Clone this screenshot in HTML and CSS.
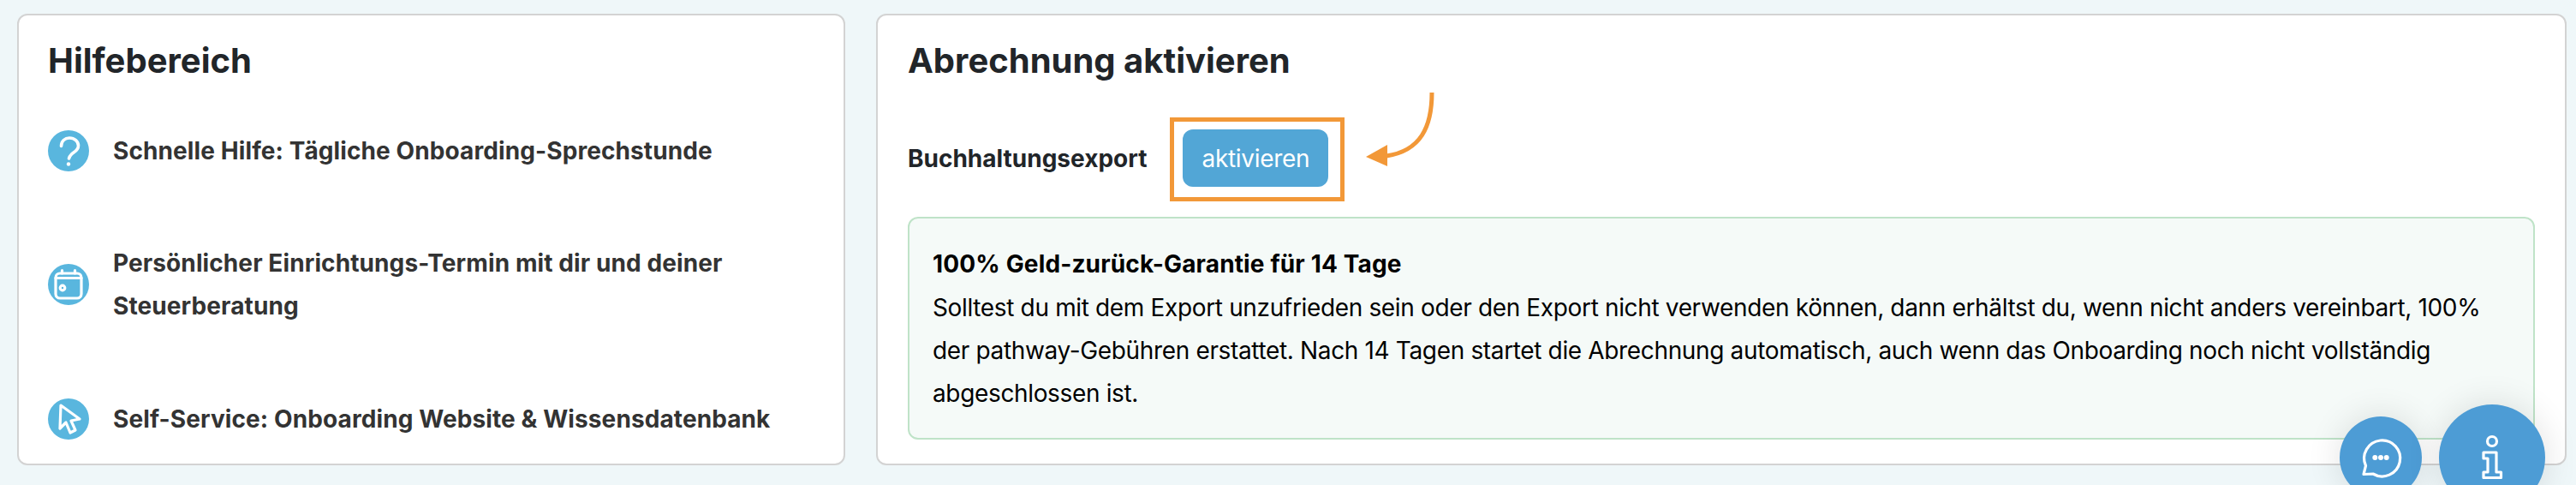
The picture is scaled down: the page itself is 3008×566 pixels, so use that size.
FILE: index.html
```html
<!DOCTYPE html>
<html lang="de">
<head>
    <meta charset="UTF-8">
    <meta name="viewport" content="width=device-width, initial-scale=1.0">
    <title>Abrechnung aktivieren</title>
    <link rel="stylesheet" href="styles.css">
</head>
<body>
    <div class="page">
        <section class="card card-help">
            <h2>Hilfebereich</h2>
            <ul class="help-list">
                <li>
                    <svg class="help-icon" viewBox="0 0 48 48">
                        <circle class="disc" cx="24" cy="24" r="24"/>
                        <path class="line line-thick" d="M15.5 18.5C15.5 12.5 20 9 25 9c6 0 10.500 4 10.500 9 0 6-5.500 7.500-8 10-1.500 1.500-2.500 3-3 5"/>
                        <circle class="dot" cx="24" cy="39.500" r="2.200"/>
                    </svg>
                    <span>Schnelle Hilfe: Tägliche Onboarding-Sprechstunde</span>
                </li>
                <li>
                    <svg class="help-icon" viewBox="0 0 48 48">
                        <circle class="disc" cx="24" cy="24" r="24"/>
                        <rect class="line" x="9" y="11" width="30" height="29" rx="5"/>
                        <path class="line" d="M9 16.500h30M16.500 7.500V11M31.500 7.500V11"/>
                        <circle class="line" cx="17" cy="28" r="2.800"/>
                    </svg>
                    <span>Persönlicher Einrichtungs-Termin mit dir und deiner Steuerberatung</span>
                </li>
                <li>
                    <svg class="help-icon" viewBox="0 0 48 48">
                        <circle class="disc" cx="24" cy="24" r="24"/>
                        <path class="line" d="M15 8L37 24l-10 2 5 11-6 3-5-12-7 7z"/>
                    </svg>
                    <span>Self-Service: Onboarding Website &amp; Wissensdatenbank</span>
                </li>
            </ul>
        </section>

        <section class="card card-billing">
            <h2>Abrechnung aktivieren</h2>
            <div class="export-row">
                <span class="export-label">Buchhaltungsexport</span>
                <div class="highlight">
                    <button class="btn-activate">aktivieren</button>
                    <svg class="arrow" viewBox="0 0 84 92">
                        <path d="M77 0C77 40 64 68 24 74" fill="none" stroke="#f29838" stroke-width="5"/>
                        <path d="M0 75L25 61V86z" fill="#f29838"/>
                    </svg>
                </div>
            </div>
            <div class="guarantee">
                <strong>100% Geld-zurück-Garantie für 14 Tage</strong>
                <p>Solltest du mit dem Export unzufrieden sein oder den Export nicht verwenden können, dann erhältst du, wenn nicht anders vereinbart, 100% der pathway-Gebühren erstattet. Nach 14 Tagen startet die Abrechnung automatisch, auch wenn das Onboarding noch nicht vollständig abgeschlossen ist.</p>
            </div>
        </section>
    </div>

    <div class="fab-group">
        <button class="fab fab-chat">
            <svg viewBox="0 0 96 96">
                <path class="line" d="M28 67.500l2.500-10A21 21 0 1 1 39 67z"/>
                <circle class="dot" cx="41.300" cy="48" r="3"/>
                <circle class="dot" cx="48" cy="48" r="3"/>
                <circle class="dot" cx="54.700" cy="48" r="3"/>
            </svg>
        </button>
        <button class="fab fab-info">
            <svg viewBox="0 0 124 124">
                <circle class="line" cx="62" cy="43" r="5.500"/>
                <path class="line" d="M52 56h15v23h5.500v6.500H52V79h5V63h-5z"/>
            </svg>
        </button>
    </div>
</body>
</html>
```

FILE: styles.css
```css
* {
    box-sizing: border-box;
}
body {
    font-family: 'Inter', sans-serif;
    margin: 0;
    height: 566px;
    overflow: hidden;
    background-color: #eff7f9;
    color: #212529;
}
.page {
    display: flex;
    gap: 36px;
    height: 566px;
    padding: 16px 11px 23px 20px;
}
.card {
    background: white;
    border: 2px solid #d3d3d3;
    border-radius: 12px;
    padding: 31px 35px 0;
}
.card-help {
    flex: 0 0 967px;
    padding-left: 34px;
}
.card-billing {
    flex: 1;
}
h2 {
    margin: 0;
    font-size: 40px;
    line-height: 44px;
    font-weight: 700;
}

/* Hilfebereich */
.help-list {
    list-style: none;
    margin: 58px 0 0;
    padding: 0;
}
.help-list li {
    display: flex;
    align-items: center;
    gap: 28px;
    margin-bottom: 81px;
    font-size: 28px;
    line-height: 50px;
    font-weight: 700;
    letter-spacing: 0.1px;
    color: #333;
}
.help-list li:last-child {
    margin-top: 82px;
    margin-bottom: 0;
}
.help-icon {
    flex: none;
    width: 48px;
    height: 48px;
}
.disc {
    fill: #59b6de;
}
.line {
    fill: none;
    stroke: white;
    stroke-width: 3.2;
    stroke-linejoin: round;
    stroke-linecap: round;
}
.line-thick {
    stroke-width: 3.6;
}
.dot {
    fill: white;
}

/* Abrechnung */
.export-row {
    display: flex;
    align-items: center;
    gap: 27px;
    margin: 44px 0 18px;
}
.export-label {
    padding-bottom: 2px;
    font-size: 28px;
    font-weight: 700;
}
.highlight {
    position: relative;
    width: 204px;
    height: 98px;
    border: 5px solid #f29838;
    padding: 9px 10px;
}
.btn-activate {
    display: block;
    width: 170px;
    height: 67px;
    padding: 0;
    border: none;
    border-radius: 12px;
    background-color: #52a6d6;
    color: white;
    font-family: inherit;
    font-size: 28px;
    letter-spacing: -0.3px;
}
.arrow {
    position: absolute;
    left: 224px;
    top: -34px;
    width: 84px;
    height: 92px;
}
.guarantee {
    height: 260px;
    padding: 28px 27px;
    border: 2px solid #bfe3c8;
    border-radius: 12px;
    background-color: #f5faf8;
    color: black;
    font-size: 28px;
    line-height: 50px;
    letter-spacing: -0.35px;
}
.guarantee strong {
    display: block;
    margin-bottom: 1px;
    font-weight: 700;
    letter-spacing: 0.15px;
}
.guarantee p {
    margin: 0;
}

/* Buttons unten rechts */
.fab-group {
    position: fixed;
    right: 36px;
    bottom: -30px;
    display: flex;
    align-items: center;
    gap: 20px;
}
.fab {
    padding: 0;
    border: none;
    border-radius: 50%;
    background-color: #4d9cd5;
    box-shadow: 0 0 40px rgba(0, 0, 0, 0.12);
}
.fab svg {
    display: block;
    width: 100%;
    height: 100%;
}
.fab-chat {
    width: 96px;
    height: 96px;
}
.fab-info {
    width: 124px;
    height: 124px;
}
```
